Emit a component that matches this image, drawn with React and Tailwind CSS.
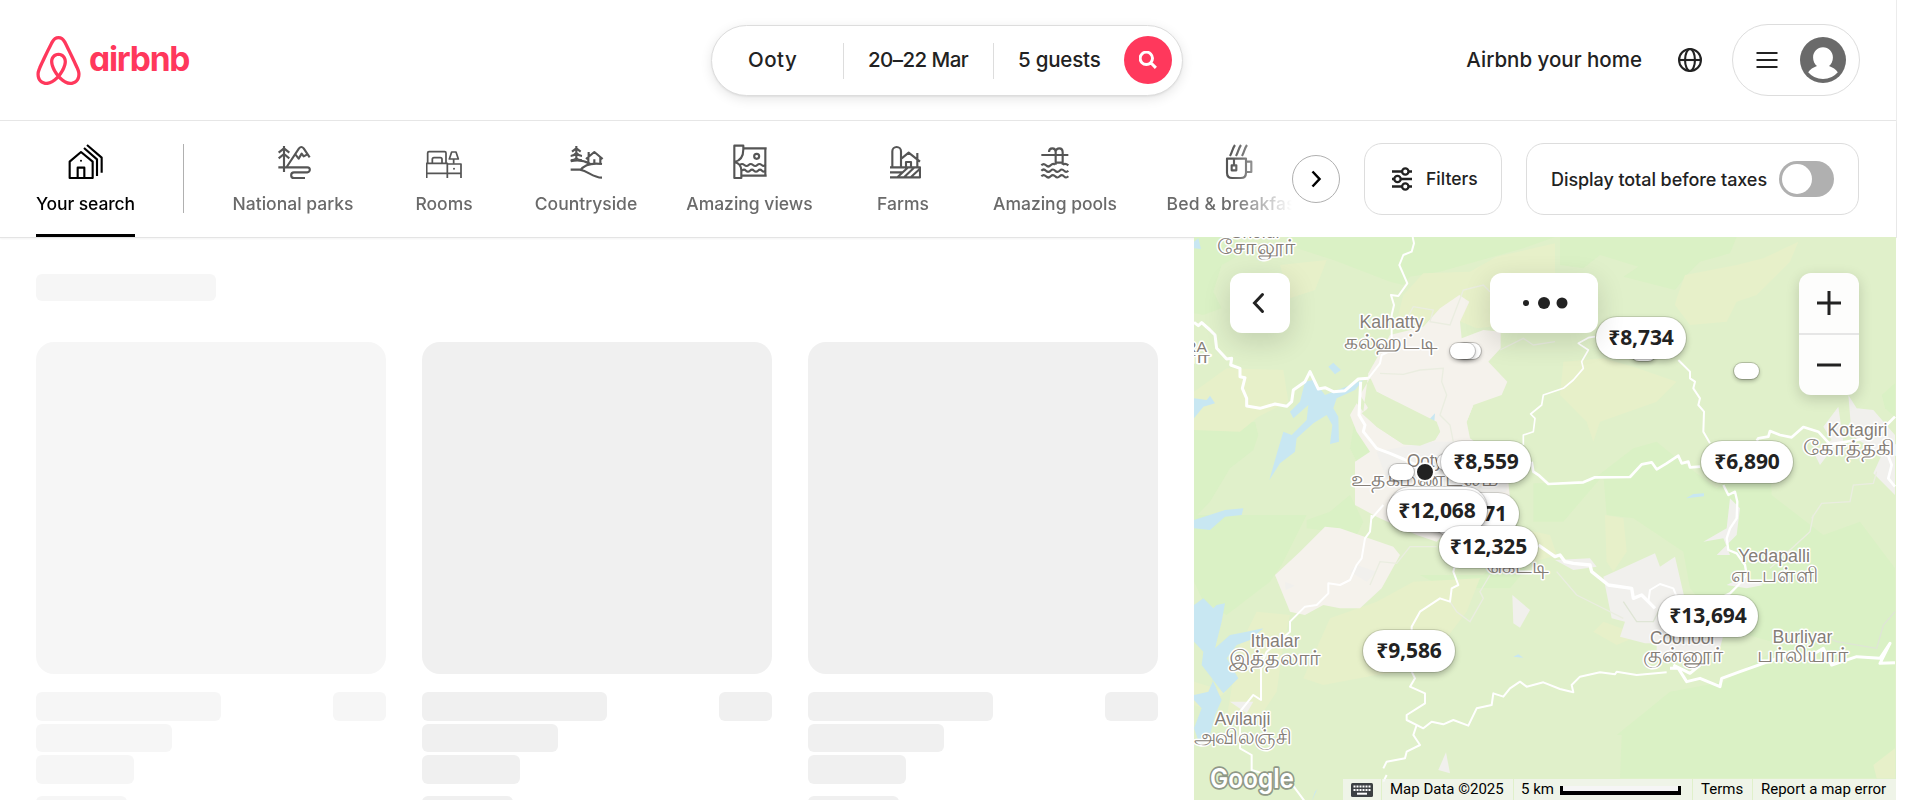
import React from "react";

const TEXT = "font-['Inter','Liberation_Sans',sans-serif]";

function CategoryIcon({ viewBox, children }) {
  return (
    <svg
      viewBox={viewBox}
      className="size-9 shrink-0"
      fill="none"
      stroke="currentColor"
      strokeWidth="6.4"
      strokeLinejoin="round"
    >
      {children}
    </svg>
  );
}

const categories = [
  {
    label: "National parks",
    width: "w-[122px]",
    icon: (
      <CategoryIcon viewBox="734 42 108 108">
        <path d="M761 48V126M745 68L761 55L777 68M745 85L761 72L777 85" />
        <path d="M744 112H831a7.500 7.500 0 0 1 0 15H791a8.500 8.500 0 0 0 0 17H824" />
        <path d="M769 111L806 55Q813 47 820 55L838 82M795 73L805 86L814 71L820 79L831 73" />
      </CategoryIcon>
    ),
  },
  {
    label: "Rooms",
    width: "w-[84px]",
    icon: (
      <CategoryIcon viewBox="136 42 108 108">
        <path d="M141 100V69q0-4 4-4H192q4 0 4 4V100M155 99V88q0-5 5-5h19q5 0 5 5v11" strokeWidth="5.200" />
        <path d="M138 144V100H200V144M138 130H241M200 102H241V144" strokeWidth="5.200" />
        <path d="M213 66H226L233 87H206ZM219 87V101" strokeWidth="5.200" />
        <circle cx="220" cy="116" r="3" fill="currentColor" stroke="none" />
      </CategoryIcon>
    ),
  },
  {
    label: "Countryside",
    width: "w-[104px]",
    icon: (
      <CategoryIcon viewBox="563 42 108 108">
        <path d="M588 48V93M575 65L588 55L601 65M571 78Q582 77 588 69Q594 77 605 78" />
        <path d="M571 94C592 88 612 92 630 102M600 121C612 104 635 98 665 102" />
        <path d="M571 119H599C626 124 635 142 665 143" />
        <path d="M617 87L642 66L667 87M624 82V101M660 82V101M625 66V80M642 88V101" />
        <path d="M571 90Q582 90 588 84Q594 90 605 90" strokeWidth="4" />
      </CategoryIcon>
    ),
  },
  {
    label: "Amazing views",
    width: "w-[127px]",
    icon: (
      <CategoryIcon viewBox="1054 42 108 108">
        <path d="M1061 47H1088V58C1088 80 1078 93 1061 96C1075 99 1082 108 1082 122V144H1061Z" />
        <path d="M1088 55H1158M1154 55V137M1083 137H1158" />
        <circle cx="1128" cy="79" r="7.500" />
        <path d="M1078 105q6-6 13 0t13 0 13 0 13 0 13 0 11-1M1084 122q6-6 12 0t12 0 12 0 12 0 12 0 10 0" />
      </CategoryIcon>
    ),
  },
  {
    label: "Farms",
    width: "w-[84px]",
    icon: (
      <CategoryIcon viewBox="132 42 108 108">
        <path d="M154 111V64a13 13 0 0 1 26 0V111" />
        <path d="M147 112H237V142H147M147 127H184M170 141L200 113M190 141L219 113M210 141L237 116" />
        <path d="M182 85L203 68L237 95M229 69V111M195 111V96H210V111" />
      </CategoryIcon>
    ),
  },
  {
    label: "Amazing pools",
    width: "w-[124px]",
    icon: (
      <CategoryIcon viewBox="592 42 108 108">
        <path d="M605 75H686M648 104V66Q648 55 638 55Q628 55 628 66M669 104V66Q669 55 659 55Q650 55 648 64M648 98H669" />
        <path d="M605 106q7-7 14 0t14 0 13-2M669 104q8-6 17 2M605 122q7-7 14 0t14 0 13.500 0 13.500 0 13 0 13 0M605 139q7-7 14 0t14 0 13.500 0 13.500 0 13 0 13 0" />
      </CategoryIcon>
    ),
  },
  {
    label: "Bed & breakfasts",
    width: "w-[148px] tracking-[0.2px]",
    icon: (
      <CategoryIcon viewBox="1145 42 108 108">
        <path d="M1172 78C1179 66 1179 56 1187 45M1190 78C1197 66 1197 56 1205 45M1208 78C1215 66 1215 56 1223 45" />
        <path d="M1163 86H1220V128q0 16-16 16h-25q-16 0-16-16ZM1220 95H1236V126H1220M1184 86V105M1177 106h14v15h-14z" />
      </CategoryIcon>
    ),
  },
];

function Header() {
  return (
    <header className="flex h-[121px] w-full shrink-0 items-start border-b border-[#e6e6e6] pl-9 pr-9">
      <div className="flex h-[120px] w-[675px] items-center">
        <svg viewBox="2.5 1 27 30" className="h-[49px] w-[45px]" fill="#FF385C">
          <path d="M16 1c2.008 0 3.463.963 4.751 3.269l.533 1.025c1.954 3.830 6.114 12.540 7.100 14.836l.145.353c.667 1.591.910 2.472.960 3.396l.010.415.001.228c0 4.062-2.877 6.478-6.357 6.478-2.224 0-4.556-1.258-6.709-3.386l-.257-.260-.172-.179h-.011l-.176.185c-2.044 2.100-4.267 3.420-6.414 3.615l-.280.019-.267.006C5.377 31 2.500 28.584 2.500 24.522l.005-.469c.026-.928.230-1.768.830-3.244l.216-.524c.966-2.298 6.083-12.989 7.707-16.034C12.537 1.963 13.992 1 16 1zm0 2c-1.239 0-2.053.539-2.987 2.210l-.523 1.008c-1.926 3.776-6.060 12.430-7.031 14.692l-.345.836c-.427 1.071-.573 1.655-.605 2.240l-.009.330v.206C4.500 27.395 6.411 29 8.857 29c1.773 0 3.870-1.236 5.831-3.354-2.295-2.938-3.855-6.450-3.855-8.910 0-2.913 1.933-5.386 5.178-5.420 3.223.034 5.156 2.507 5.156 5.420 0 2.456-1.555 5.960-3.855 8.907C19.277 27.766 21.370 29 23.143 29c2.447 0 4.358-1.605 4.358-4.478l-.004-.411c-.019-.672-.170-1.296-.714-2.620l-.248-.600c-1.065-2.478-5.993-12.768-7.538-15.664C18.053 3.539 17.240 3 16 3zm.010 10.316c-2.010.021-3.177 1.514-3.177 3.420 0 1.797 1.180 4.580 2.955 7.044l.210.287.174-.234c1.730-2.385 2.898-5.066 2.989-6.875l.006-.221c0-1.906-1.167-3.400-3.156-3.421h-.001z" />
        </svg>
        <span className="ml-2 text-[33.5px] leading-none font-bold tracking-[-1.2px] text-[#FF385C] [font-feature-settings:'cv11']">
          airbnb
        </span>
      </div>

      <div className="mt-[25px] flex h-[71px] w-[472px] shrink-0 items-center rounded-full border border-[#dddddd] bg-white pl-9 text-[20.5px] font-medium text-[#222222] shadow-[0_3px_12px_rgba(0,0,0,0.1),0_1px_2px_rgba(0,0,0,0.06)]">
        <span className="w-[95px] tracking-[0.5px]">Ooty</span>
        <span className="h-9 w-px bg-[#dddddd]" />
        <span className="w-[149px] pl-6 tracking-[-0.55px] whitespace-nowrap">20–22 Mar</span>
        <span className="h-9 w-px bg-[#dddddd]" />
        <span className="w-[130px] pl-6 tracking-[-0.2px] whitespace-nowrap">5 guests</span>
        <span className="mb-px flex size-12 items-center justify-center rounded-full bg-[#FF385C]">
          <svg viewBox="0 0 32 32" className="size-[18px]" fill="none" stroke="white" strokeWidth="5.333">
            <path d="M13 24a11 11 0 1 0 0-22 11 11 0 0 0 0 22zm8-3 9 9" />
          </svg>
        </span>
      </div>

      <div className="flex h-[120px] flex-1 items-center justify-end">
        <span className="text-[20.5px] font-medium whitespace-nowrap text-[#222222]">Airbnb your home</span>
        <svg viewBox="0 0 16 16" className="ml-9 size-6" fill="none" stroke="#222222" strokeWidth="1.400">
          <circle cx="8" cy="8" r="7.300" />
          <ellipse cx="8" cy="8" rx="3.300" ry="7.300" />
          <path d="M.8 8h14.400" />
        </svg>
        <div className="ml-[30px] flex h-[72px] w-32 items-center rounded-full border border-[#dddddd] pl-[22px]">
          <svg viewBox="0 0 24 24" className="size-6" stroke="#222222" strokeWidth="2.200">
            <path d="M1.500 5H22.500M1.500 12H22.500M1.500 19H22.500" />
          </svg>
          <svg viewBox="0 0 32 32" className="ml-[21px] size-[46px]">
            <circle cx="16" cy="16" r="16" fill="#6a6a6a" />
            <path
              fill="white"
              d="M16 7.200c3.900 0 6.900 3.100 6.900 7 0 2.500-1.100 4.700-2.700 6 2.600.9 4.800 2.400 6.100 4.300A13.500 13.500 0 0 1 16 29.200a13.500 13.500 0 0 1-10.300-4.700c1.300-1.900 3.500-3.400 6.100-4.300-1.600-1.300-2.700-3.500-2.700-6 0-3.900 3-7 6.900-7z"
            />
          </svg>
        </div>
      </div>
    </header>
  );
}

function CategoryBar() {
  return (
    <div className="flex h-[117px] w-full shrink-0 items-start border-b border-[#e4e4e4] pl-9 pr-9 shadow-[0_1px_2px_rgba(0,0,0,0.05)]">
      <div className="flex h-[116px] w-[1256px] shrink-0 gap-12 overflow-hidden text-[17.5px] leading-6 font-medium whitespace-nowrap text-[#6a6a6a] [mask-image:linear-gradient(to_right,black_1195px,transparent_1256px)]">
        <div className="flex w-[99px] shrink-0 flex-col items-center pt-[23px] text-black">
          <CategoryIcon viewBox="112 42 108 108">
            <path d="M117 95L151 66L186 95V144H117ZM141 144V113H161V144M160 54L199 88V138M169 45L213 83V128" />
            <circle cx="151" cy="92" r="3" fill="currentColor" stroke="none" />
          </CategoryIcon>
          <span className="mt-3 tracking-[-0.1px]">Your search</span>
          <span className="mt-auto h-[3px] w-full bg-black" />
        </div>
        <span className="mt-[23px] h-[69px] w-px shrink-0 bg-[#b0b0b0]" />
        {categories.map((category) => (
          <div key={category.label} className={`flex shrink-0 flex-col items-center pt-[23px] ${category.width}`}>
            <div className="text-[#555555]">{category.icon}</div>
            <span className="mt-3">{category.label}</span>
          </div>
        ))}
      </div>
      <button className="mt-[34px] flex size-12 shrink-0 items-center justify-center rounded-full border border-[#b0b0b0] bg-white">
        <svg viewBox="0 0 18 18" className="size-[18px]" fill="none" stroke="black" strokeWidth="2.500">
          <path d="M5.500 1.500L12.500 9L5.500 16.500" />
        </svg>
      </button>
      <button className="mt-[22px] ml-6 flex h-[72px] w-[138px] shrink-0 items-center rounded-[18px] border border-[#dddddd] pl-[26px]">
        <svg viewBox="0 0 22 24" className="h-6 w-[22px]" fill="none" stroke="#222222" strokeWidth="2.300">
          <path d="M1 4.500H11M17.500 4.500H21M1 12H3M10 12H21M1 19.500H11M17.500 19.500H21" />
          <circle cx="14.300" cy="4.500" r="3.200" />
          <circle cx="6.500" cy="12" r="3.200" />
          <circle cx="14.300" cy="19.500" r="3.200" />
        </svg>
        <span className="ml-[13px] text-[17.5px] font-medium text-[#222222]">Filters</span>
      </button>
      <div className="mt-[22px] ml-6 flex h-[72px] w-[333px] shrink-0 items-center rounded-[18px] border border-[#dddddd] pl-6">
        <span className="w-[228px] text-[18px] font-medium tracking-[-0.07px] whitespace-nowrap text-[#222222]">
          Display total before taxes
        </span>
        <span className="flex h-9 w-[55px] items-center rounded-full bg-[#b0b0b0] pl-[2.5px]">
          <span className="size-[30px] rounded-full bg-white" />
        </span>
      </div>
    </div>
  );
}

function SkeletonCard({ tone }) {
  return (
    <div className="flex w-[350px] shrink-0 flex-col">
      <div className={`h-[332px] rounded-[18px] ${tone}`} />
      <div className="mt-[18px] flex justify-between">
        <div className={`h-[29px] w-[185px] rounded-md ${tone}`} />
        <div className={`h-[29px] w-[53px] rounded-md ${tone}`} />
      </div>
      <div className={`mt-[3px] h-7 w-[136px] rounded-md ${tone}`} />
      <div className={`mt-[3px] h-[29px] w-[98px] rounded-md ${tone}`} />
      <div className={`mt-3 h-[29px] w-[91px] rounded-md ${tone}`} />
    </div>
  );
}

const places = [
  { x: 1256, y: 238, text: "Sholur" },
  { x: 1256, y: 254, text: "சோலூர்", w: 78, size: 21 },
  { x: 1391.5, y: 327.5, text: "Kalhatty", w: 64 },
  { x: 1391, y: 348.5, text: "கல்ஹட்டி", w: 94, size: 21 },
  { x: 1196, y: 352, text: "RA", w: 22, size: 15 },
  { x: 1196, y: 363, text: "ரா", w: 28, size: 17 },
  { x: 1425, y: 467, text: "Ooty", w: 36 },
  { x: 1425, y: 486, text: "உதகமண்டலம்", w: 148, size: 21 },
  { x: 1857.5, y: 436, text: "Kotagiri", w: 60 },
  { x: 1857, y: 455, text: "கோத்தகிரி", w: 108, size: 21 },
  { x: 1517, y: 573, text: "கெட்டி", w: 63, size: 21 },
  { x: 1275, y: 647, text: "Ithalar", w: 49 },
  { x: 1275, y: 665, text: "இத்தலார்", w: 92, size: 21 },
  { x: 1242.5, y: 725, text: "Avilanji", w: 56 },
  { x: 1242.5, y: 744, text: "அவிலஞ்சி", w: 98, size: 21 },
  { x: 1774, y: 562, text: "Yedapalli", w: 72 },
  { x: 1774, y: 582, text: "எடபள்ளி", w: 87, size: 21 },
  { x: 1683, y: 644, text: "Coonoor", w: 66 },
  { x: 1683, y: 662, text: "குன்னூர்", w: 81, size: 21 },
  { x: 1802.5, y: 643, text: "Burliyar", w: 60 },
  { x: 1802.5, y: 662, text: "பர்லியார்", w: 91, size: 21 },
];

/* Terrain, water and roads, drawn in a 3x grid whose origin is (1190, 235). */
function MapCanvas() {
  return (
    <svg viewBox="1194 237 702 563" className="absolute inset-0 h-full w-full">
      <rect x="1194" y="237" width="702" height="563" fill="#e0f0ca" />
      <g transform="translate(1190 235) scale(0.333333)">
        <g fill="#daf1c5">
          <path d="M12 6H140L150 60L95 90L70 170L95 220L40 240L12 235Z" />
          <path d="M290 6H1095L1000 40L750 110L660 125L640 150L600 140L430 75L320 40Z" />
          <path d="M1110 6H1640L1620 55L1530 80L1490 120L1455 165L1300 125L1345 95L1230 60L1180 100L1110 90Z" />
          <path d="M12 560H195L205 600L190 645L120 700L60 800L12 850Z" />
          <path d="M12 840H350L275 990L240 1040L110 1140L40 1100L12 1040Z" />
          <path d="M495 550L545 660L510 700L480 640Z" />
          <path d="M350 855L420 830L480 780L520 860L500 900L350 880Z" />
          <path d="M1030 745L1200 740L1330 640L1400 620L1460 670L1500 700L1580 760L1740 640L1745 780L1900 900L2010 860L2115 1000V1580L2060 1630H1290L1295 1500L1280 1500L1440 1370L1600 1340L1780 1230L1600 1180L1500 1060L1480 950L1330 850L1250 840L1240 720L1120 860L1030 860Z" />
          <path d="M690 1020H880L940 960L1010 1000L960 1060L840 1060L800 1080Z" />
          <path d="M2075 480L2115 445V545L2085 520Z" />
        </g>
        <g fill="#e7f0c9">
          <path d="M270 90L410 75L375 165L300 190Z" />
          <path d="M640 180L700 115L840 110L920 65L1095 25V180L950 270L860 280L740 230L700 270L620 260Z" />
          <path d="M12 470L110 400L280 405L295 500L205 545L150 590L12 585Z" />
          <path d="M1460 190L1485 120L1640 90L1720 70L1825 20L1800 80L1700 180L1640 200L1610 260L1500 270L1455 210Z" />
          <path d="M1120 380L1240 370L1330 395L1460 440L1400 500L1230 560L1210 620L1190 560L1110 480Z" />
          <path d="M670 1040L870 1030L830 1130L700 1300L560 1320L400 1350L340 1330L420 1150L560 1100Z" />
          <path d="M200 1130L300 1140L280 1230L260 1370L200 1460L110 1450L130 1330L150 1230Z" />
          <path d="M940 870L1080 900L1100 960L970 1000L930 930Z" />
          <path d="M1245 840L1300 850L1310 950L1270 1010L1250 980Z" />
          <path d="M1240 1160L1350 1200L1280 1230L1210 1190Z" />
          <path d="M12 1340L110 1370L40 1420L12 1410Z" />
          <path d="M2050 1590L2115 1540V1630H2060Z" />
        </g>
        <path
          fill="#f5f2ec"
          fillRule="evenodd"
          d="M535 415L600 300L700 275L750 220L808 180L838 200L810 260L815 310L880 285L932 290V340L895 380L952 440L935 480L850 510L830 560L840 610L950 690L960 790L830 830L740 920L680 900L560 845L495 810V680L540 650L500 590L480 540L500 505L520 530ZM540 430L610 480L740 560L750 590L735 615L690 632L640 628L560 575L515 535L535 520L510 480Z"
        />
        <path
          fill="#f5f2ec"
          d="M535 415L600 400L760 440L850 510L830 560L750 575L640 515L560 470Z"
        />
        <path fill="#f5f2ec" d="M255 1020L330 950L405 875L450 880L610 935L630 960L575 1060L510 1120L450 1120L400 1110L345 1140L300 1130Z" />
        <g fill="#f1f0ed">
          <path d="M560 650L720 620L840 620L950 690V770L800 780L600 760Z" />
          <path d="M1240 1025L1395 955L1410 995L1455 965L1500 1160L1460 1225L1365 1225L1290 1205L1305 1160L1265 1150Z" />
          <path d="M1400 1210L1560 1210L1600 1200L1590 1240L1520 1280L1400 1270Z" />
          <path d="M1975 480L2000 520L2050 525L2115 600V780L2050 715L2075 660L2020 625L1985 600Z" />
          <path d="M1945 515L1900 575L1925 615L1870 650L1890 690L1920 650L1960 620Z" />
          <path d="M1620 790L1650 820L1640 900L1580 960L1620 960L1600 910L1540 920L1610 880Z" />
          <path d="M967 1080L1020 1125L990 1178L970 1165Z" />
          <path d="M745 1605L768 1552L780 1615Z" />
          <path d="M120 1400L190 1400L170 1435Z" />
          <path d="M1095 975L1200 970L1220 995L1150 1005Z" />
          <path d="M1610 1050L1660 1025L1720 1050L1670 1060Z" />
          <path d="M480 1010L500 990L560 1010L530 1040Z" />
          <path d="M285 1040L315 1052L287 1065Z" />
        </g>
        <g fill="#c8e7f2">
          <path d="M345 440L370 435L405 480L430 470L505 440L520 435L495 465L440 490L430 520L445 545L447 620L420 627L427 570L410 540L370 565L320 610L315 650L270 685L238 735L262 650L280 590L305 600L350 555L355 510L310 550L300 530L330 500Z" />
          <path d="M415 395L430 383L453 405L435 418Z" />
          <path d="M710 562L735 535L733 560Z" />
          <path d="M12 490L50 495L60 482L75 505L40 515L12 550Z" />
          <path d="M12 20L25 10L33 42L12 40Z" />
          <path d="M12 855L75 835L105 825L160 820L155 840L105 845L60 885L12 880Z" />
          <path d="M12 1110L40 1090L70 1120L80 1110L105 1105L95 1160L75 1240L120 1200L170 1190L220 1180L180 1215L140 1230L110 1270L145 1330L100 1375L65 1330L95 1395L75 1440L60 1500L30 1530L12 1480L35 1420L12 1395V1380L55 1370L70 1335L35 1290L40 1250L12 1220Z" />
          <path d="M1488 790L1510 777L1542 775V784Z" />
          <path d="M970 1265L985 1258L1000 1268Z" />
          <path d="M375 1670L382 1662L365 1700Z" />
        </g>
        <g fill="none" stroke="#eaede0" strokeWidth="4">
          <path d="M570 415L640 418L690 405L760 400L755 440L770 480L750 540L780 570L790 620M640 270L670 215L730 225L720 260L780 270L820 165L880 150L900 170M930 345L1000 310L1030 330L1095 320M540 1050L570 980L620 985L660 935L740 935M780 1100L800 1130L840 1160L880 1090L870 1070L900 1020" />
          <path d="M1865 850L1895 805L1980 800L1990 750L2050 745L2060 710M1100 1010L1160 1080L1220 1110L1300 1150M1740 1000L1860 890L1870 840" />
          <path d="M1300 1100L1340 1160L1390 1160L1410 1120M1870 1190L1940 1220L2060 1240L2080 1170L2115 1130" stroke="#dfe5d6" />
        </g>
        <g fill="none" stroke="white" strokeLinejoin="round">
          <path strokeWidth="9" d="M12 262L25 272L35 263L60 285L75 300L80 340L110 372L125 370L122 390L150 400L150 425L165 428L157 460L170 490L170 513L210 520L255 507L290 514L305 500L310 465L345 440L360 410L385 462L405 458L430 470L465 467L505 432L535 430" />
          <path strokeWidth="6" d="M535 430L570 385L575 360L605 345L605 240L612 210L603 180L625 183L652 145L628 90L640 60L665 50L672 25L668 6" />
          <path strokeWidth="9" d="M512 440L507 540L525 570L520 590L560 640L600 655L640 672L700 700" />
          <path strokeWidth="8" d="M1025 680L1030 710L1048 722L1075 747L1180 742L1215 727L1320 726L1355 688L1385 682L1400 703L1430 685L1465 662L1475 685L1495 680L1500 697L1530 695" />
          <path strokeWidth="6" d="M1465 375L1500 410L1500 430L1515 440L1510 460L1530 490L1525 510L1542 530L1540 590L1560 625" />
          <path strokeWidth="5" d="M1215 305L1195 308L1165 325L1195 345L1175 380L1180 400L1150 435L1120 460L1060 480L1055 510L1022 537L1035 550L1030 590L1000 600V630" />
          <path strokeWidth="8" d="M1700 617L1705 610L1735 605L1740 588L1770 600L1805 607L1840 576L1885 590L1920 628L2000 615L2060 600L2090 570L2115 545M2090 650L2105 690L2095 730L2115 755" />
          <path strokeWidth="7" d="M1600 750L1615 780L1635 770L1642 800L1640 850L1620 880L1610 910L1615 945L1640 955L1665 990L1670 1020L1645 1050L1620 1075L1600 1085" />
          <path strokeWidth="6" d="M545 840L540 890L525 910L515 970L500 990L480 1035L450 1050L415 1045V1075L380 1110L345 1115L300 1160L300 1190L230 1250L213 1290L213 1395L190 1380L150 1430L150 1540L185 1560V1605L300 1640L345 1700" />
          <path strokeWidth="6" d="M580 810L545 850" />
          <path strokeWidth="6" d="M795 990L790 1010L805 1050L785 1060L780 1100L750 1090L690 1130L665 1175V1310L675 1330L660 1355L705 1375L705 1405L650 1440V1455L700 1480L725 1460L760 1468L790 1455L835 1472L860 1420L905 1410L910 1375L940 1385L960 1360L990 1340L1010 1355L1060 1342L1110 1362L1150 1372L1145 1350L1170 1325L1230 1312L1275 1318L1280 1310L1340 1320L1430 1312" />
          <path strokeWidth="6" d="M680 1470L670 1500L690 1530L650 1550L645 1570L590 1580L580 1600M590 1620L580 1640" />
          <path strokeWidth="10" d="M1045 930L1095 965L1110 960L1125 980L1150 985L1200 990L1205 1010L1255 1050L1325 1060L1330 1090L1355 1080L1395 1120" />
          <path strokeWidth="6" d="M1375 1100L1380 1065L1410 1047L1450 1060L1460 1085" />
          <path strokeWidth="9" d="M1440 1300L1465 1300L1490 1340L1530 1330L1590 1355L1595 1330L1650 1310L1720 1285L1790 1260L1850 1270L1900 1240L1925 1290L2000 1265L2070 1270L2100 1225L2070 1285L2115 1283M1450 1290L1500 1315L1530 1290" />
        </g>
        <path fill="#e0f0ca" d="M530 525L560 470L640 510L740 560L750 590L735 615L690 632L640 628L560 575Z" />
      </g>
      <g fontFamily="'Liberation Sans', sans-serif" fill="#857e77" stroke="white" strokeWidth="3" strokeLinejoin="round" paintOrder="stroke" textAnchor="middle">
        {places.map((p) => (
          <text key={p.text} x={p.x} y={p.y} fontSize={p.size || 17.5} textLength={p.w} lengthAdjust="spacingAndGlyphs">
            {p.text}
          </text>
        ))}
      </g>
      <text
        x="1210"
        y="788"
        fontFamily="Inter, sans-serif"
        fontSize="27"
        fontWeight="600"
        textLength="84"
        lengthAdjust="spacingAndGlyphs"
        fill="white"
        stroke="#8f9887"
        strokeWidth="3.500"
        strokeLinejoin="round"
        paintOrder="stroke"
      >
        Google
      </text>
    </svg>
  );
}

const PILL =
  "absolute flex h-[42px] items-center justify-center rounded-full bg-white font-['Noto_Sans',sans-serif] text-[21px] font-bold tracking-[-0.1px] text-[#222222] shadow-[0_0_0_1px_rgba(0,0,0,0.12),0_3px_6px_rgba(0,0,0,0.28)]";
const MINI =
  "absolute h-4 w-[25px] rounded-full bg-white shadow-[0_0_0_1px_rgba(0,0,0,0.18),0_2px_4px_rgba(0,0,0,0.3)]";

function MapPanel() {
  return (
    <div className="relative h-[563px] w-[702px] shrink-0 overflow-hidden">
      <MapCanvas />

      {/* Price markers */}
      <span className={`${MINI} top-[106px] left-[262px] bg-[#eeeeee]`} />
      <span className={`${MINI} top-[106px] left-[256px]`} />
      <span className={`${MINI} top-[126px] left-[540px]`} />
      <span className={`${MINI} top-[227px] left-[195px]`} />
      <span className={`${MINI} top-[108px] left-[437px]`} />
      <span className={`${MINI} top-[217px] left-[243px]`} />
      <span className="absolute top-[225px] left-[221px] size-5 rounded-full border-[2.5px] border-white bg-[#222222]" />
      <span className={`${PILL} top-[204px] left-[247px] w-[90px]`}>₹8,559</span>
      <span className={`${PILL} top-[256px] left-[235px] w-[90px] justify-end pr-[12px]`}>71</span>
      <span className={`${PILL} top-[250px] left-[195px] w-[98px] bg-[#eeeeee]`} />
      <span className={`${PILL} top-[253px] left-[193px] w-[100px]`}>₹12,068</span>
      <span className={`${PILL} top-[289px] left-[245px] w-[99px]`}>₹12,325</span>
      <span className={`${PILL} top-[393px] left-[169px] w-[92px]`}>₹9,586</span>
      <span className={`${PILL} top-[80px] left-[402px] w-[90px]`}>₹8,734</span>
      <span className={`${PILL} top-[204px] left-[507px] w-[92px]`}>₹6,890</span>
      <span className={`${PILL} top-[358px] left-[464px] w-[100px]`}>₹13,694</span>

      {/* Controls */}
      <button className="absolute top-9 left-9 flex size-[60px] items-center justify-center rounded-xl bg-white shadow-[0_8px_28px_rgba(0,0,0,0.14)]">
        <svg viewBox="0 0 24 24" className="size-6" fill="none" stroke="#222222" strokeWidth="3" strokeLinecap="round">
          <path d="M14.500 3.500L6.500 12L14.500 20.500" />
        </svg>
      </button>
      <div className="absolute top-9 left-[296px] flex h-[60px] w-[108px] items-center justify-center rounded-xl bg-white shadow-[0_8px_28px_rgba(0,0,0,0.14)]">
        <svg viewBox="0 0 108 60" className="h-[60px] w-[108px]" fill="#222222">
          <circle cx="36" cy="30" r="3" />
          <circle cx="54" cy="30" r="6" />
          <circle cx="72" cy="30" r="5.500" />
        </svg>
      </div>
      <div className="absolute top-9 left-[605px] flex h-[122px] w-[60px] flex-col rounded-xl bg-[#fdfdfc] shadow-[0_4px_14px_rgba(0,0,0,0.16)]">
        <button className="flex h-[62px] items-center justify-center border-b-2 border-[#e6e6e6]">
          <svg viewBox="0 0 24 24" className="size-6" stroke="#222222" strokeWidth="3">
            <path d="M12 0V24M0 12H24" />
          </svg>
        </button>
        <button className="flex h-[60px] items-center justify-center">
          <svg viewBox="0 0 24 24" className="size-6" stroke="#222222" strokeWidth="3">
            <path d="M0 12H24" />
          </svg>
        </button>
      </div>

      {/* Attribution */}
      <div className="absolute right-0 bottom-0 flex h-[21px] w-[553px] gap-px font-['Roboto',sans-serif] text-[15px] leading-[21px] whitespace-nowrap text-black">
        <span className="flex w-[38px] items-center justify-center bg-[#f5f5f5]/70">
          <svg viewBox="0 0 22 14" className="h-[14px] w-[22px]">
            <rect width="22" height="14" rx="1.500" fill="#3c4043" />
            <path d="M2.500 3.500h17M2.500 7h17" stroke="white" strokeWidth="2" strokeDasharray="2 1" />
            <path d="M6 10.700h10" stroke="white" strokeWidth="2" />
          </svg>
        </span>
        <span className="w-[131px] bg-[#f5f5f5]/70 pl-2">Map Data ©2025</span>
        <span className="flex w-[178px] bg-[#f5f5f5]/70 pl-[7px]">
          5 km
          <span className="mt-[7px] ml-[6px] h-[9px] w-[121px] border-x-[3px] border-b-4 border-black bg-[#f5f5f5]" />
        </span>
        <span className="w-[59px] bg-[#f5f5f5]/70 pl-2">Terms</span>
        <span className="flex-1 bg-[#f5f5f5]/70 pl-[8px]">Report a map error</span>
      </div>
    </div>
  );
}

export default function App() {
  return (
    <div className={`flex h-[800px] w-[1920px] overflow-hidden bg-white ${TEXT}`}>
      <div className="flex w-[1896px] flex-col">
        <div className="flex h-[238px] shrink-0 flex-col shadow-[1px_0_0_#ececec]">
          <Header />
          <CategoryBar />
        </div>
        <main className="-mt-px flex h-[563px]">
          <section className="flex w-[1194px] shrink-0 flex-col overflow-hidden pl-9">
            <div className="mt-[37px] h-[27px] w-[180px] shrink-0 rounded-md bg-[#f6f6f6]" />
            <div className="mt-[41px] flex gap-9">
              <SkeletonCard tone="bg-[#f6f6f6]" />
              <SkeletonCard tone="bg-[#f0f0f0]" />
              <SkeletonCard tone="bg-[#f0f0f0]" />
            </div>
          </section>
          <MapPanel />
        </main>
      </div>
    </div>
  );
}
